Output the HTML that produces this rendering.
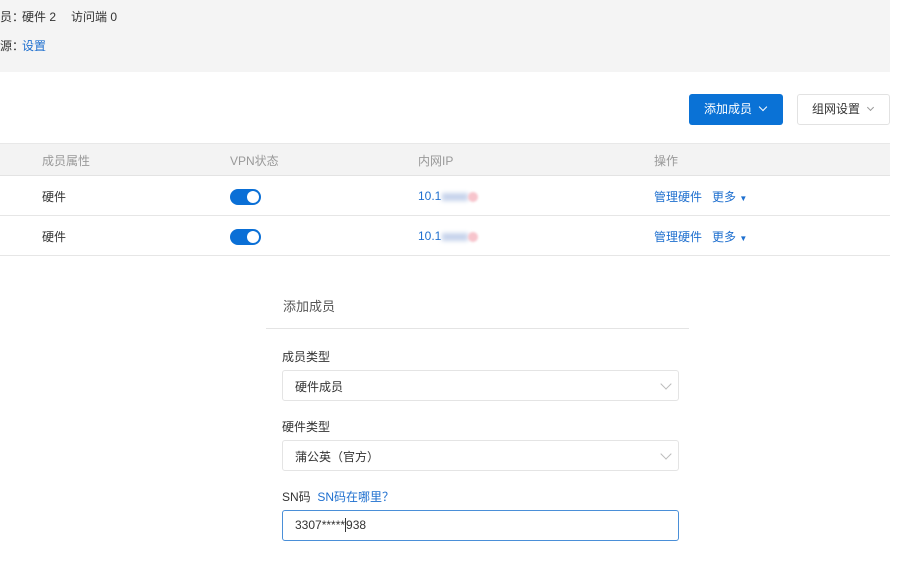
<!DOCTYPE html>
<html><head><meta charset="utf-8"><style>
*{margin:0;padding:0;box-sizing:border-box}
body{width:900px;height:566px;background:#fff;font-family:"Liberation Sans","Noto Sans CJK SC",sans-serif;font-size:12px;color:#333;position:relative;overflow:hidden}
.a{position:absolute;white-space:nowrap}
.blue{color:#1e6fcf}
.tog{position:absolute;width:31px;height:16px;border-radius:8px;background:#0a6fd6}
.tog:after{content:"";position:absolute;right:2px;top:2px;width:12px;height:12px;border-radius:50%;background:#fff}
.sel{position:absolute;left:282px;width:397px;height:31px;border:1px solid #e4e4e4;border-radius:3px;background:#fff}
.chev{position:absolute;right:8px;top:9px;width:8px;height:8px;border-right:1px solid #bbb;border-bottom:1px solid #bbb;transform:rotate(45deg)}
.blur{display:inline-block;width:26px;height:8px;background:#c7d4ec;filter:blur(2px);vertical-align:middle;margin-left:1px}
.dot{display:inline-block;width:10px;height:10px;border-radius:50%;background:#f7c4cc;filter:blur(1px);vertical-align:middle}
</style></head><body>
<div class="a" style="left:0;top:0;width:890px;height:72px;background:#f4f4f4"></div>
<div class="a" style="left:0;top:8px">员：<span style="position:absolute;left:22px">硬件 2</span><span style="position:absolute;left:71px">访问端 0</span></div>
<div class="a" style="left:0;top:37px">源：<span class="blue" style="position:absolute;left:22px">设置</span></div>
<div class="a" style="left:689px;top:94px;width:94px;height:31px;background:#0a72d6;border-radius:3px;color:#fff;line-height:31px;padding-left:15px">添加成员 <span style="display:inline-block;width:6px;height:6px;border-right:1.3px solid #fff;border-bottom:1.3px solid #fff;transform:rotate(45deg);margin:0 0 3px 5px"></span></div>
<div class="a" style="left:797px;top:94px;width:93px;height:31px;border:1px solid #e2e2e2;border-radius:3px;line-height:29px;padding-left:14px">组网设置 <span style="display:inline-block;width:5px;height:5px;border-right:1px solid #999;border-bottom:1px solid #999;transform:rotate(45deg);margin:0 0 3px 5px"></span></div>
<div class="a" style="left:0;top:143px;width:890px;height:33px;background:#f3f3f3;border-top:1px solid #e8e8e8;border-bottom:1px solid #e3e3e3"></div>
<div class="a" style="left:42px;top:152px;color:#999">成员属性</div>
<div class="a" style="left:230px;top:152px;color:#999">VPN状态</div>
<div class="a" style="left:418px;top:152px;color:#999">内网IP</div>
<div class="a" style="left:654px;top:152px;color:#999">操作</div>
<div class="a" style="left:0;top:215px;width:890px;height:1px;background:#e6e6e6"></div>
<div class="a" style="left:0;top:255px;width:890px;height:1px;background:#e6e6e6"></div>
<div class="a" style="left:42px;top:188px">硬件</div>
<div class="a" style="left:42px;top:228px">硬件</div>
<div class="tog" style="left:230px;top:189px"></div>
<div class="tog" style="left:230px;top:229px"></div>
<div class="a blue" style="left:418px;top:189px">10.1<span class="blur"></span><span class="dot"></span></div>
<div class="a blue" style="left:418px;top:229px">10.1<span class="blur"></span><span class="dot"></span></div>
<div class="a blue" style="left:654px;top:188px">管理硬件&nbsp;&nbsp;&nbsp;更多 <span style="font-size:8px">▼</span></div>
<div class="a blue" style="left:654px;top:228px">管理硬件&nbsp;&nbsp;&nbsp;更多 <span style="font-size:8px">▼</span></div>
<div class="a" style="left:283px;top:296px;font-size:13px;color:#555">添加成员</div>
<div class="a" style="left:266px;top:328px;width:423px;height:1px;background:#e4e4e4"></div>
<div class="a" style="left:282px;top:348px">成员类型</div>
<div class="sel" style="top:370px"><span class="a" style="left:12px;top:7px">硬件成员</span><div class="chev"></div></div>
<div class="a" style="left:282px;top:418px">硬件类型</div>
<div class="sel" style="top:440px"><span class="a" style="left:12px;top:7px">蒲公英（官方）</span><div class="chev"></div></div>
<div class="a" style="left:282px;top:488px">SN码&nbsp;&nbsp;<span class="blue">SN码在哪里？</span></div>
<div class="sel" style="top:510px;border-color:#4a8fd8"><span class="a" style="left:12px;top:7px">3307*****<span style="border-left:1px solid #333"></span>938</span></div>
</body></html>
